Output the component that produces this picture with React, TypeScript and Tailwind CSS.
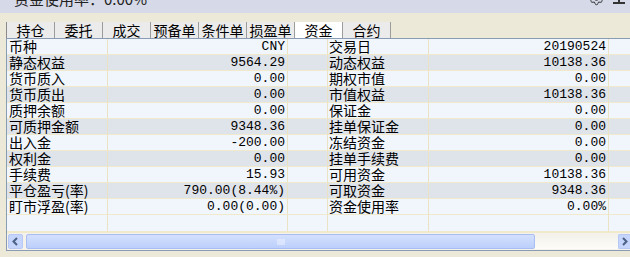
import React from "react";
import { Settings } from "lucide-react";

const cjk = { fontFamily: '"Noto Sans CJK SC", "Noto Sans", sans-serif' };
const mono = { fontFamily: '"Liberation Mono", "DejaVu Sans Mono", monospace' };

const tabs = ["持仓", "委托", "成交", "预备单", "条件单", "损盈单", "资金", "合约"];

const rows: [string, string, string, string][] = [
  ["币种", "CNY", "交易日", "20190524"],
  ["静态权益", "9564.29", "动态权益", "10138.36"],
  ["货币质入", "0.00", "期权市值", "0.00"],
  ["货币质出", "0.00", "市值权益", "10138.36"],
  ["质押余额", "0.00", "保证金", "0.00"],
  ["可质押金额", "9348.36", "挂单保证金", "0.00"],
  ["出入金", "-200.00", "冻结资金", "0.00"],
  ["权利金", "0.00", "挂单手续费", "0.00"],
  ["手续费", "15.93", "可用资金", "10138.36"],
  ["平仓盈亏(率)", "790.00(8.44%)", "可取资金", "9348.36"],
  ["盯市浮盈(率)", "0.00(0.00)", "资金使用率", "0.00%"],
];

function Row({ cells, shade }: { cells?: [string, string, string, string]; shade: boolean }) {
  const bg = shade ? "bg-[#dfe3ea]" : "bg-[#f1f6fd]";
  return (
    <div className={`flex h-[16px] border-b border-[#f1e9cc] ${bg}`}>
      <div className="w-[101px] border-r border-[#ebe2c2] pl-[2px] text-[14px] leading-[15px] text-black whitespace-nowrap" style={cjk}>
        {cells?.[0]}
      </div>
      <div className="w-[180px] border-r border-[#ebe2c2] pr-[2px] text-right text-[13px] leading-[16px] text-black whitespace-nowrap" style={mono}>
        {cells?.[1]}
      </div>
      <div className="w-[40px] border-r border-[#ebe2c2]" />
      <div className="w-[101px] border-r border-[#ebe2c2] pl-[1px] text-[14px] leading-[15px] text-black whitespace-nowrap" style={cjk}>
        {cells?.[2]}
      </div>
      <div className="w-[180px] border-r border-[#ebe2c2] pr-[2px] text-right text-[13px] leading-[16px] text-black whitespace-nowrap" style={mono}>
        {cells?.[3]}
      </div>
      <div className="flex-1" />
    </div>
  );
}

export default function App() {
  return (
    <div className="w-[630px] h-[257px] overflow-hidden bg-[#ece9d8] flex flex-col">
      {/* title strip, cut off at top */}
      <div className="h-[13px] bg-[#d6d9e7] flex items-start overflow-hidden">
        <div className="pl-[14px] -mt-[10px] text-[15px] leading-[18px] text-[#222] whitespace-nowrap" style={cjk}>
          资金使用率：0.00%
        </div>
        <div className="ml-auto flex items-start gap-[8px] pr-[4px]">
          <Settings size={15} strokeWidth={1.6} className="text-[#333] -mt-[9px]" />
          <div className="w-[14px] flex flex-col items-center">
            <div className="w-[2px] h-[2px] bg-[#333]" />
            <div className="w-[12px] h-[2px] bg-[#333]" />
          </div>
        </div>
      </div>

      <div className="h-[9px]" />

      {/* tabs */}
      <div className="flex h-[16px] ml-[6px] border-l border-[#8a8a8a]">
        {tabs.map((t) => (
          <div
            key={t}
            className={`w-[48px] border-r border-[#9c9c9c] text-center text-[14px] leading-[16px] text-black whitespace-nowrap ${
              t === "资金" ? "bg-white" : "bg-[#ebebeb]"
            }`}
            style={cjk}
          >
            {t}
          </div>
        ))}
      </div>

      {/* grid */}
      <div className="ml-[6px] flex flex-col border-l border-t border-[#8a9cb4] bg-[#f1f6fd]">
        {rows.map((r, i) => (
          <Row key={i} cells={r} shade={i % 2 === 1} />
        ))}
        <div className="flex h-[18px] bg-[#f1f6fd] border-b-2 border-[#f1e9cc]">
          <div className="w-[101px] border-r border-[#ebe2c2]" />
          <div className="w-[180px] border-r border-[#ebe2c2]" />
          <div className="w-[40px] border-r border-[#ebe2c2]" />
          <div className="w-[101px] border-r border-[#ebe2c2]" />
          <div className="w-[180px] border-r border-[#ebe2c2]" />
          <div className="flex-1" />
        </div>

        {/* horizontal scrollbar */}
        <div className="flex h-[17px] items-stretch bg-[#f4f2ea] pl-[1px] pt-[1px] pb-[1px]">
          <div className="w-[15px] rounded-[2px] border border-[#b7c8f5] bg-[#c6d5fc] flex items-center justify-center">
            <svg width="7" height="9" viewBox="0 0 7 9">
              <path d="M5 1 L1.5 4.5 L5 8" stroke="#4d6185" strokeWidth="2" fill="none" />
            </svg>
          </div>
          <div className="w-[509px] ml-[3px] rounded-[2px] border border-[#a9bdf2] bg-gradient-to-b from-[#d4e0fd] to-[#bccffb] flex items-center justify-center">
            <svg width="8" height="6" viewBox="0 0 8 6">
              <path d="M1 0V6M3 0V6M5 0V6M7 0V6" stroke="#eef3ff" strokeWidth="1" />
            </svg>
          </div>
          <div className="flex-1 bg-gradient-to-b from-[#f3f1ea] to-[#fdfcf8]" />
          <div className="w-[12px] rounded-l-[2px] border border-r-0 border-[#b7c8f5] bg-[#c6d5fc] flex items-center justify-center">
            <svg width="7" height="9" viewBox="0 0 7 9">
              <path d="M2 1 L5.5 4.5 L2 8" stroke="#4d6185" strokeWidth="2" fill="none" />
            </svg>
          </div>
        </div>
        <div className="h-[1px] bg-[#8a9cb4]" />
      </div>
    </div>
  );
}
